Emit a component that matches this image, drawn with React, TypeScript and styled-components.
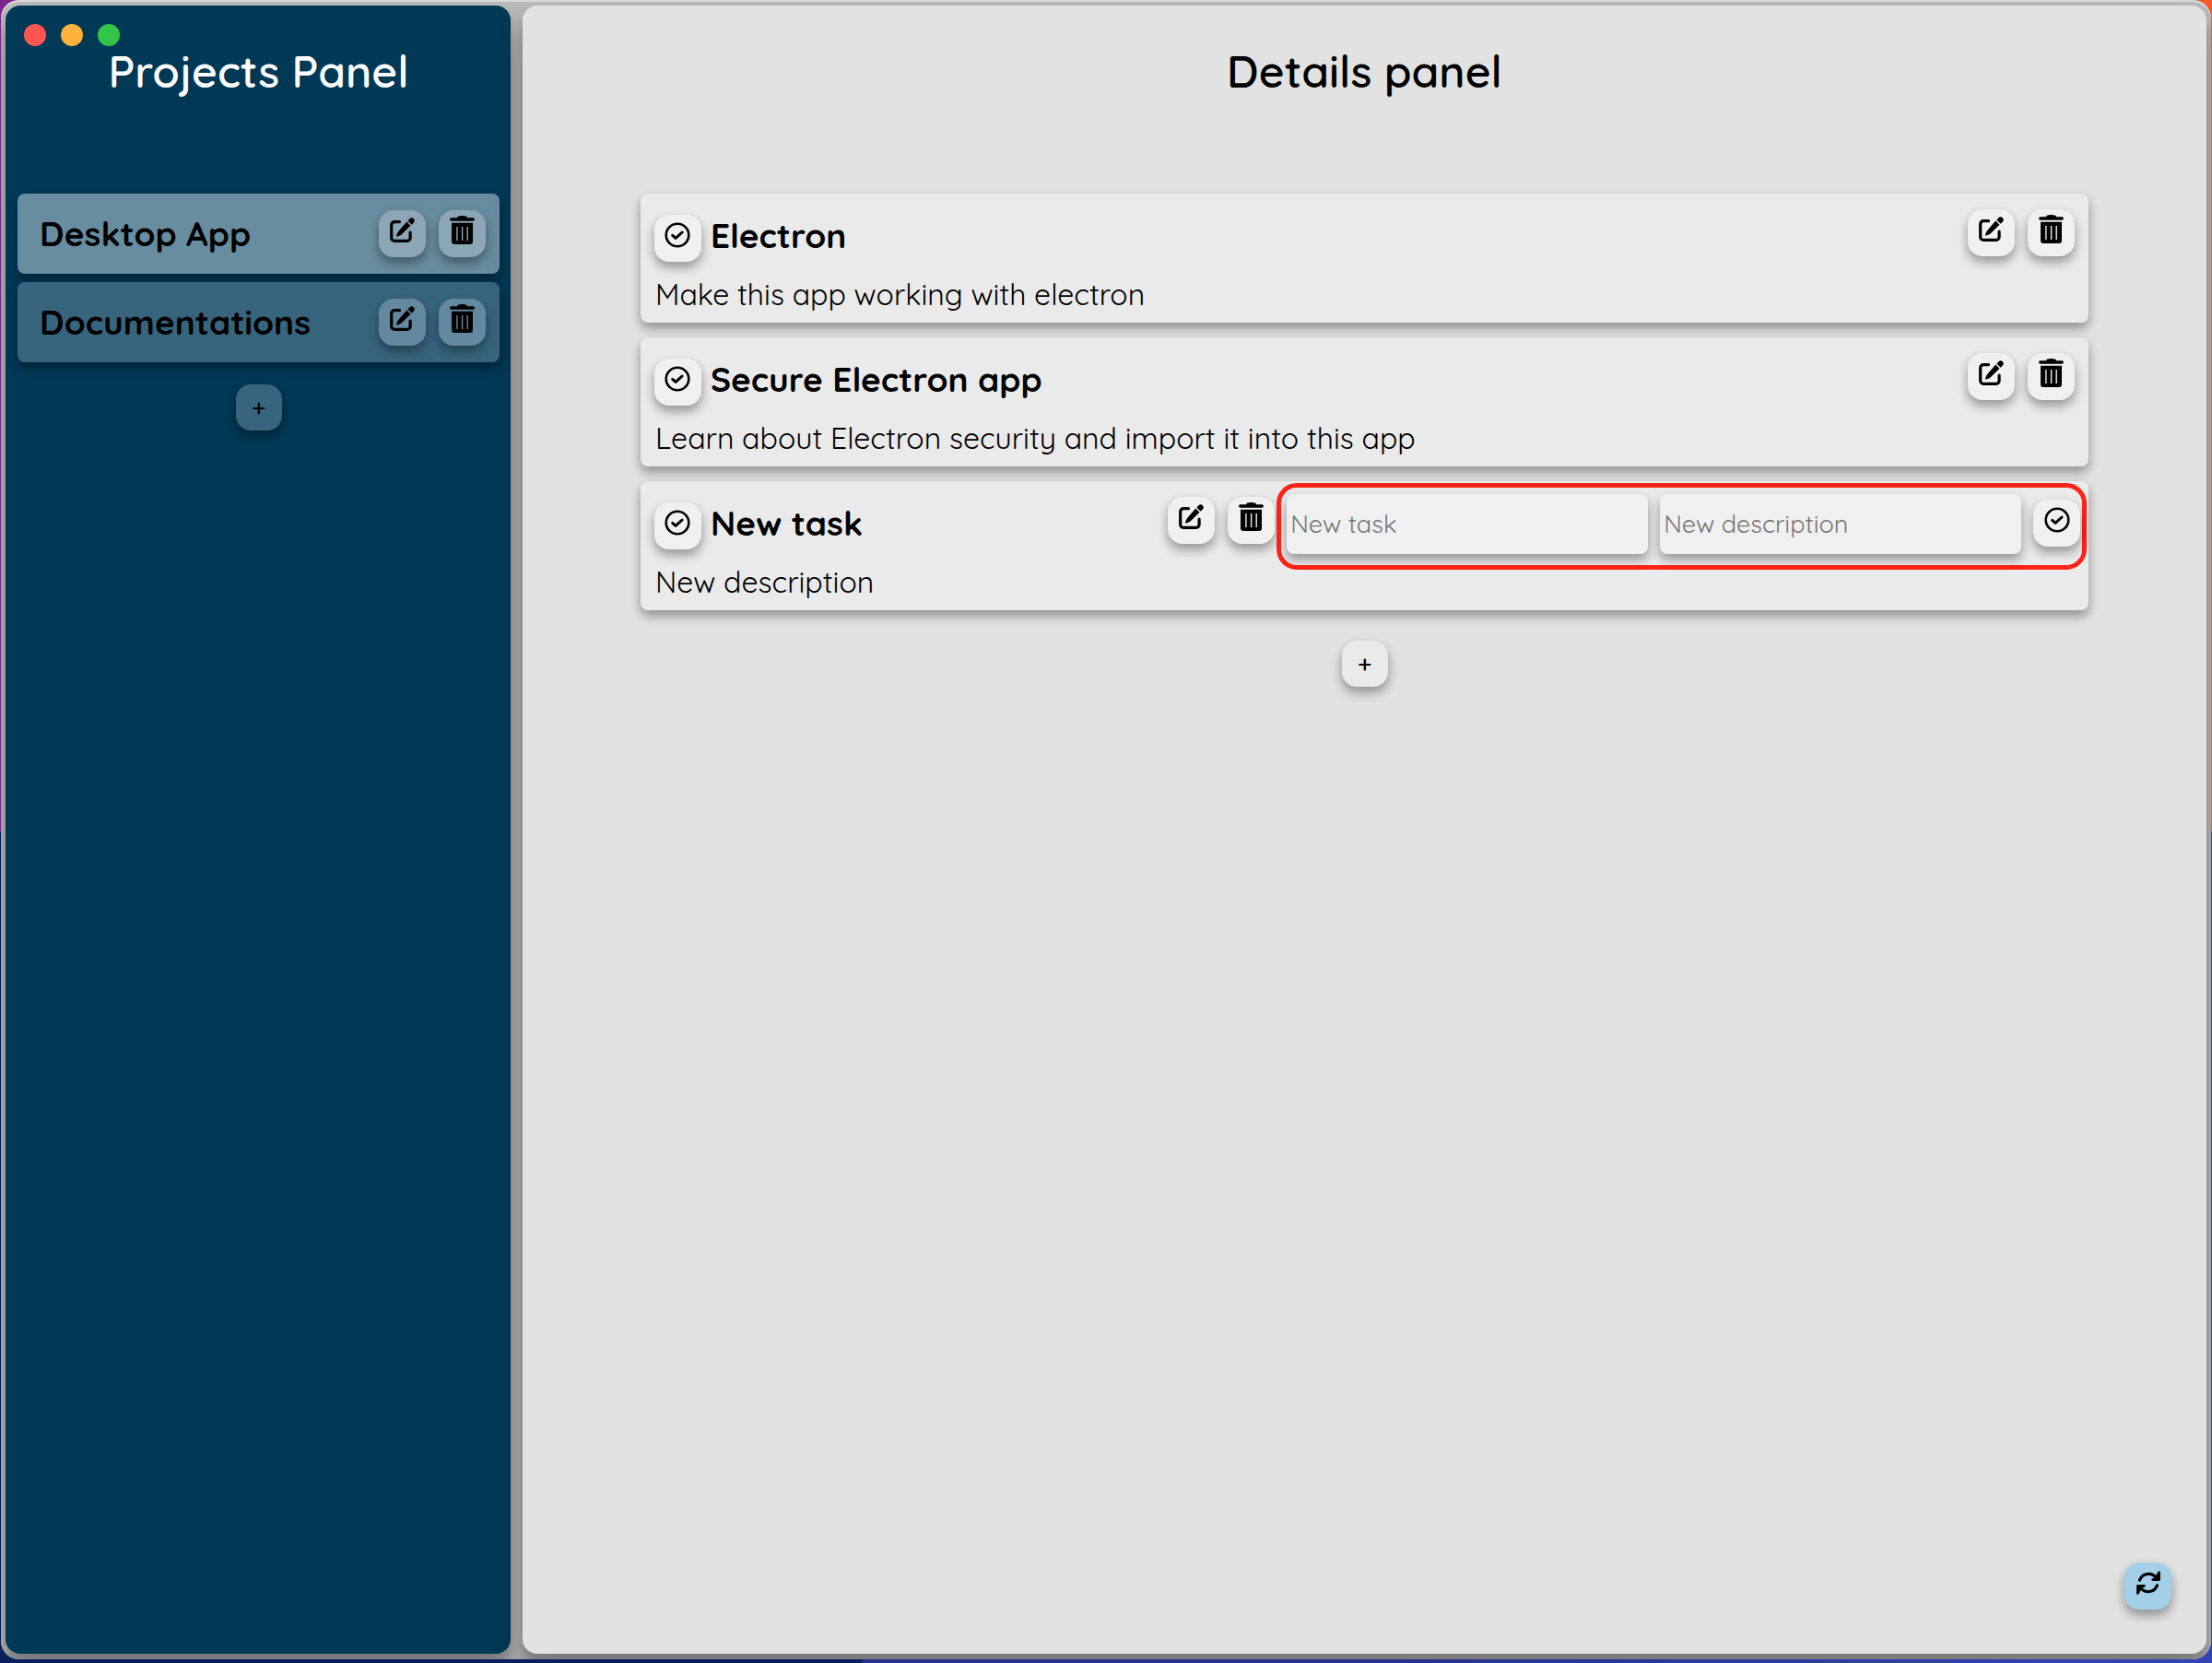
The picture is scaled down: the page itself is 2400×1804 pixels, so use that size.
import React from "react";
import styled, { createGlobalStyle, css } from "styled-components";

const GlobalStyle = createGlobalStyle`
  *, *::before, *::after { box-sizing: border-box; }
  body {
    margin: 0;
    font-family: Quicksand, Lato, "Noto Sans", sans-serif;
    color: #000;
  }
  button, input { font: inherit; color: inherit; border: 0; }
  h1, h2, p, ul { margin: 0; padding: 0; }
  ul { list-style: none; }
`;

const liftedShadow = "0 6px 12px rgba(0, 0, 0, 0.16), 0 6px 12px rgba(0, 0, 0, 0.23)";

const Desktop = styled.div`
  height: 100vh;
  padding: 0 1px 4px;
  background:
    linear-gradient(90deg, #0b1f5c 0 39%, #26308c 39% 60%, #3345b4) bottom / 100% 50% no-repeat,
    linear-gradient(90deg, #7b2390, #f25a2b) top / 100% 50% no-repeat;
`;

const Window = styled.div`
  display: grid;
  grid-template-columns: 3fr 10fr;
  gap: 13px;
  height: 100%;
  padding: 6px 5px;
  border-radius: 20px;
  overflow: hidden;
  background: #bcbcbc;
  box-shadow: inset 0 2px 0 #dcdcdc, inset 0 0 0 1px #b4b4b4;
`;

const panel = css`
  position: relative;
  display: flex;
  flex-direction: column;
  border-radius: 16px;
  box-shadow: 0 20px 40px rgba(0, 0, 0, 0.19), 0 12px 12px rgba(0, 0, 0, 0.23);
`;

const Sidebar = styled.aside`
  ${panel}
  padding: 0 12px 0 13px;
  background: #003956;
`;

const Details = styled.main`
  ${panel}
  background: #e2e2e2;
`;

const PanelTitle = styled.h1<{ $light?: boolean }>`
  margin: 41px 0 103px;
  font-size: 48px;
  line-height: 60px;
  font-weight: 600;
  text-align: center;
  color: ${(p) => (p.$light ? "#fff" : "#000")};
`;

const WindowControls = styled.div`
  position: absolute;
  top: 20px;
  left: 20px;
  display: flex;
  gap: 16px;
`;

const WindowControl = styled.button<{ $color: string }>`
  width: 24px;
  height: 24px;
  padding: 0;
  border-radius: 50%;
  background: ${(p) => p.$color};
`;

const ProjectList = styled.ul`
  display: grid;
  gap: 9px;
`;

const ProjectRow = styled.li<{ $active?: boolean }>`
  --button: ${(p) => (p.$active ? "#8ca6b5" : "#64889f")};
  display: flex;
  align-items: center;
  justify-content: space-between;
  height: 87px;
  padding: 0 15px 0 24px;
  border-radius: 8px;
  background: ${(p) => (p.$active ? "#698da0" : "#38657e")};
  box-shadow: ${liftedShadow};
`;

const Name = styled.h2`
  font-size: 37px;
  line-height: 57px;
  font-weight: 700;
  white-space: nowrap;
`;

const Actions = styled.div`
  display: flex;
  gap: 14px;
`;

const IconButton = styled.button<{ $color?: string }>`
  display: flex;
  flex: none;
  align-items: center;
  justify-content: center;
  width: 51px;
  height: 51px;
  padding: 0 0 8px;
  border-radius: 16px;
  background: ${(p) => p.$color ?? "var(--button, #f0f0f0)"};
  box-shadow: ${liftedShadow};
`;

const AddButton = styled.button<{ $color: string }>`
  align-self: center;
  width: 50px;
  height: 50px;
  padding: 0;
  border-radius: 16px;
  font-size: 27px;
  line-height: 44px;
  font-weight: 500;
  background: ${(p) => p.$color};
  box-shadow: ${liftedShadow};
`;

const SidebarAdd = styled(AddButton)`
  margin-top: 24px;
`;

const TaskAdd = styled(AddButton)`
  margin-top: 33px;
`;

const TaskList = styled.ul`
  display: grid;
  gap: 16px;
  padding: 0 7%;
`;

const TaskCard = styled.li`
  padding: 17px 15px 11px;
  border-radius: 8px;
  background: #eaeaea;
  box-shadow: ${liftedShadow};
`;

const TaskHeader = styled.div`
  display: flex;
  align-items: flex-start;
  height: 57px;
`;

const TaskHeading = styled.div`
  display: flex;
  flex: 1;
  align-items: flex-start;
  gap: 10px;
  min-width: 0;
`;

const CompleteButton = styled(IconButton)`
  margin-top: 6px;
`;

const Description = styled.p`
  margin-top: 15px;
  padding-left: 1px;
  font-size: 32px;
  line-height: 40px;
  font-weight: 400;
`;

const EditForm = styled.form`
  display: flex;
  align-items: flex-start;
  gap: 13px;
  height: 94px;
  margin: -15px -13px -22px 2px;
  padding: 7px 2px 7px 6px;
  border: 5px solid #ff2419;
  border-radius: 22px;
`;

const TextField = styled.input`
  flex: 0 1 392px;
  width: 392px;
  min-width: 0;
  height: 65px;
  padding: 0 4px 2px;
  border-radius: 8px;
  font-size: 27px;
  font-weight: 400;
  background: #f0f0f0;
  box-shadow: ${liftedShadow};
  &::placeholder { color: #757575; opacity: 1; }
`;

const SyncButton = styled(IconButton)`
  align-self: flex-end;
  margin: auto 38px 48px 0;
`;

const EditIcon = () => (
  <svg width="27" height="27" viewBox="0 0 27 27" aria-hidden="true">
    <path d="M10.5 4.7H5A3.3 3.3 0 0 0 1.7 8v14A3.3 3.3 0 0 0 5 25.3h13.8a3.3 3.3 0 0 0 3.3-3.3v-5.8" fill="none" stroke="#000" strokeWidth="3.2" strokeLinecap="round" />
    <path d="M18.3 4.6l4.2 4.2-10 9.6c-1.3 1.1-3.1 1.7-4.600 2.200-.6.2-1-.2-.8-.8.4-1.600 1.100-3.600 2.300-5z" />
    <path d="M19.400 3.500l1.900-2.100c1.300-1.500 3.200-1.500 4.500-.2s1.300 3.200-.1 4.500l-2.100 2z" />
  </svg>
);

const TrashIcon = () => (
  <svg width="27" height="31" viewBox="0 0 27 31" aria-hidden="true">
    <path d="M8 2.200C8 .8 10 0 13.500 0S19 .8 19 2.200h6.500a1.800 1.800 0 0 1 0 3.500h-24a1.800 1.800 0 0 1 0-3.500z" />
    <path fillRule="evenodd" d="M2 7.700h23V28a3 3 0 0 1-3 3H5a3 3 0 0 1-3-3zM7.200 12v15h1.400V12zM12.900 12v15h1.400V12zM18.500 12v15h1.400V12z" />
  </svg>
);

const CheckIcon = () => (
  <svg width="28" height="28" viewBox="0 0 28 28" fill="none" stroke="#000" strokeLinecap="round" strokeLinejoin="round" aria-hidden="true">
    <circle cx="14" cy="14" r="12.300" strokeWidth="2.600" />
    <path d="M8.700 14.300l3.400 3.100 7-6.400" strokeWidth="3" />
  </svg>
);

const SyncArrow = () => (
  <>
    <path d="M3.500 10.200A10.300 10.300 0 0 1 21.500 7.600" fill="none" stroke="#000" strokeWidth="3.200" strokeLinecap="round" />
    <path d="M24.600 1.600v8H17.600l3.200-1.400z" stroke="#000" strokeWidth="2.600" strokeLinecap="round" strokeLinejoin="round" />
  </>
);

const SyncIcon = () => (
  <svg width="26" height="26" viewBox="0 0 26 26" aria-hidden="true">
    <SyncArrow />
    <g transform="rotate(180 13 13)">
      <SyncArrow />
    </g>
  </svg>
);

const RowActions = ({ name }: { name: string }) => (
  <Actions>
    <IconButton type="button" aria-label={`Edit ${name}`}>
      <EditIcon />
    </IconButton>
    <IconButton type="button" aria-label={`Delete ${name}`}>
      <TrashIcon />
    </IconButton>
  </Actions>
);

const projects = [
  { name: "Desktop App", active: true },
  { name: "Documentations", active: false },
];

const tasks = [
  { name: "Electron", description: "Make this app working with electron", editing: false },
  { name: "Secure Electron app", description: "Learn about Electron security and import it into this app", editing: false },
  { name: "New task", description: "New description", editing: true },
];

export default function App() {
  return (
    <>
      <GlobalStyle />
      <Desktop>
        <Window>
          <Sidebar>
            <WindowControls>
              <WindowControl type="button" aria-label="Close" $color="#ff5550" />
              <WindowControl type="button" aria-label="Minimize" $color="#ffb33c" />
              <WindowControl type="button" aria-label="Zoom" $color="#32c546" />
            </WindowControls>
            <PanelTitle $light>Projects Panel</PanelTitle>
            <ProjectList>
              {projects.map((project) => (
                <ProjectRow key={project.name} $active={project.active}>
                  <Name>{project.name}</Name>
                  <RowActions name={project.name} />
                </ProjectRow>
              ))}
            </ProjectList>
            <SidebarAdd type="button" $color="#38657e">+</SidebarAdd>
          </Sidebar>
          <Details>
            <PanelTitle>Details panel</PanelTitle>
            <TaskList>
              {tasks.map((task) => (
                <TaskCard key={task.name}>
                  <TaskHeader>
                    <TaskHeading>
                      <CompleteButton type="button" aria-label={`Complete ${task.name}`}>
                        <CheckIcon />
                      </CompleteButton>
                      <Name>{task.name}</Name>
                    </TaskHeading>
                    <RowActions name={task.name} />
                    {task.editing && (
                      <EditForm onSubmit={(event) => event.preventDefault()}>
                        <TextField aria-label="Task name" placeholder={task.name} />
                        <TextField aria-label="Task description" placeholder={task.description} />
                        <CompleteButton type="submit" aria-label="Save task">
                          <CheckIcon />
                        </CompleteButton>
                      </EditForm>
                    )}
                  </TaskHeader>
                  <Description>{task.description}</Description>
                </TaskCard>
              ))}
            </TaskList>
            <TaskAdd type="button" $color="#eaeaea">+</TaskAdd>
            <SyncButton type="button" aria-label="Sync" $color="#a3cfe8">
              <SyncIcon />
            </SyncButton>
          </Details>
        </Window>
      </Desktop>
    </>
  );
}
